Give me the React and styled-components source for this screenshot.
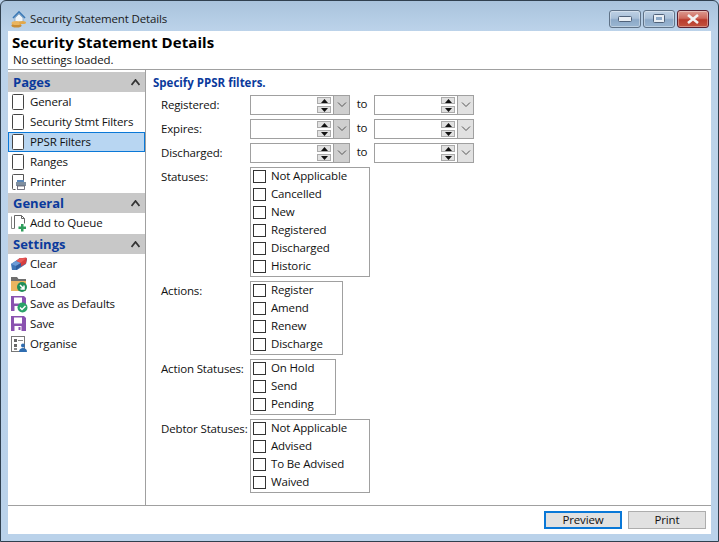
import React from "react";
import styled, { createGlobalStyle } from "styled-components";

const Global = createGlobalStyle`
  html, body { margin: 0; padding: 0; background: #b9d1ea; }
  body { font-family: "Open Sans", "Noto Sans", sans-serif; font-size: 11.5px; letter-spacing: -0.15px; color: #111; }
`;
const Win = styled.div`
  width: 719px; height: 542px; box-sizing: border-box;
  display: flex; flex-direction: column;
  border: 1px solid #30404f; border-radius: 6px 6px 0 0;
  background: linear-gradient(180deg, #a9c3dc 0, #bcd3ea 30px, #bad2ea 100%);
  padding: 0 7px 7px;
`;
const TitleBar = styled.div`
  height: 30px; flex: none; display: flex; align-items: center; box-sizing: border-box;
  margin: 0 -7px; padding: 5px 9px 0 9px;
`;
const TitleText = styled.span`
  margin-left: 2px; padding-bottom: 1px; font-size: 11.5px; color: #1a1a1a; flex: 1;
`;
const Ctl = styled.div`
  width: 32px; height: 18px; box-sizing: border-box; margin-left: 2px;
  display: flex; align-items: center; justify-content: center;
  border: 1px solid ${p => (p.$close ? "#5b2030" : "#5f7287")};
  border-radius: 3px;
  box-shadow: inset 0 0 0 1px rgba(255,255,255,.35);
  background: ${p => p.$close
    ? "linear-gradient(180deg,#dc9a90 0,#cf6a5d 45%,#b93a2c 55%,#c2533f 100%)"
    : "linear-gradient(180deg,#bed1e4 0,#a9c0d8 45%,#8ca9c8 55%,#9ab6d2 100%)"};
`;
const Client = styled.div`
  flex: 1; min-height: 0; display: flex; flex-direction: column; background: #fff;
`;
const Header = styled.div`
  height: 39px; flex: none; box-sizing: border-box; padding: 2px 0 0 4px;
  border-bottom: 1px solid #a0a0a0;
`;
const H1 = styled.div`
  font-weight: 700; font-size: 15px; line-height: 19px; letter-spacing: 0.08px; color: #000;
`;
const Sub = styled.div`
  font-size: 11.5px; line-height: 14px; color: #111; margin: 1px 0 0 1px;
`;
const Body = styled.div`
  flex: 1; min-height: 0; display: flex;
`;
const Side = styled.div`
  width: 138px; flex: none; box-sizing: border-box; border-right: 1px solid #a0a0a0; padding-top: 1px;
`;
const Band = styled.div`
  height: 20px; margin-top: 1px; background: #c8c8c8; display: flex; align-items: center;
  justify-content: space-between; padding: 0 5px 0 5px;
  font-weight: 700; font-size: 13px; letter-spacing: 0; color: #0b3a9c;
`;
const Item = styled.div`
  height: 20px; box-sizing: border-box; display: flex; align-items: center; padding-left: 2px;
  gap: 2px; color: #111;
  ${p => p.$sel && "background:#b8d6f2; border:1px solid #0a78d7; padding-left:1px;"}
`;
const IconBox = styled.span`
  width: 18px; height: 18px; flex: none; display: flex; align-items: center; justify-content: flex-start;
`;
const Caption = styled.span`
  padding-bottom: 2px;
`;
const CheckCaption = styled.span`
  padding-bottom: 3px;
`;
const Main = styled.div`
  flex: 1; padding: 5px 0 0 7px; min-width: 0;
`;
const Title2 = styled.div`
  font-weight: 700; font-size: 11.5px; letter-spacing: 0; line-height: 16px; color: #0b3a9c;
`;
const Form = styled.div`
  margin: 4px 0 0 8px; display: grid; grid-template-columns: 89px auto 1fr; row-gap: 4px;
  grid-auto-rows: min-content;
`;
const Label = styled.div`
  grid-column: 1; line-height: 18px; padding-top: 1px;
`;
const DateRow = styled.div`
  grid-column: 2 / 4; display: flex; align-items: center; height: 20px;
`;
const To = styled.span`
  width: 24px; text-align: center; padding-bottom: 3px;
`;
const DateBox = styled.div`
  width: 100px; height: 20px; box-sizing: border-box; display: flex; justify-content: flex-end;
  border: 1px solid #a0a0a0; background: #fff;
`;
const Spin = styled.div`
  width: 14px; margin-right: 2px; display: flex; flex-direction: column; justify-content: center; gap: 2px;
`;
const SpinBtn = styled.div`
  height: 7px; background: #e1e1e1; border: 1px solid #ababab; box-sizing: border-box; width: 14px;
  display: flex; align-items: center; justify-content: center;
`;
const Drop = styled.div`
  width: 15px; background: ${p => (p.$dark ? "#cfcfcf" : "#e1e1e1")}; border-left: 1px solid #a0a0a0;
  display: flex; align-items: center; justify-content: center;
`;
const CheckList = styled.div`
  grid-column: 2; box-sizing: border-box; width: ${p => p.$w}px; border: 1px solid #a0a0a0; padding: 0 0 0 2px;
`;
const Check = styled.div`
  height: 18px; display: flex; align-items: center; gap: 5px;
`;
const Box = styled.span`
  width: 13px; height: 13px; margin-bottom: 1px; box-sizing: border-box; border: 1px solid #333; background: #fff; flex: none;
`;
const Footer = styled.div`
  height: 29px; flex: none; box-sizing: border-box; border-top: 1px solid #a0a0a0;
  display: flex; justify-content: flex-end; align-items: flex-start; gap: 6px; padding: 5px 5px 0 0;
`;
const Btn = styled.div`
  width: 78px; height: 18px; box-sizing: border-box; background: #e1e1e1;
  border: ${p => (p.$def ? "2px solid #0a78d7" : "1px solid #adadad")};
  display: flex; align-items: center; justify-content: center; color: #111; line-height: 14px;
`;

const Page = () => (
  <svg width="16" height="16" viewBox="0 0 16 16"><rect x="2.5" y="0.5" width="11" height="15" rx="1" fill="#fff" stroke="#444" /></svg>
);
const Printer = () => (
  <svg width="18" height="16" viewBox="0 0 18 16">
    <path d="M5.500 15.500h-2a1 1 0 0 1-1-1V1.500a1 1 0 0 1 1-1h10v6" fill="none" stroke="#555" />
    <rect x="7" y="6" width="7" height="2" fill="#5a86b8" />
    <rect x="6" y="8" width="10" height="4" fill="#7f8fa0" />
    <rect x="7.500" y="12" width="7" height="3.500" fill="#fff" stroke="#556" strokeWidth=".8" />
  </svg>
);
const Queue = () => (
  <svg width="18" height="18" viewBox="0 0 18 18">
    <path d="M1.500 2.500v12h3" fill="none" stroke="#888" />
    <path d="M4.500 14.500v-13h7l3 3v5" fill="#fff" stroke="#666" />
    <path d="M11.500 1.500v3h3" fill="none" stroke="#666" />
    <path d="M11 10h2.500v2.500H16V15h-2.500v2.500H11V15H8.500v-2.500H11z" fill="#2e9e5b" />
  </svg>
);
const Eraser = () => (
  <svg width="18" height="16" viewBox="0 0 18 16">
    <path d="M1 8l9-6 6 0 1 1-1 5-9 6-5 0z" fill="#3e74b6" />
    <path d="M9 2.500l7-1 1 1-1 5-5 3-4-3z" fill="#d63f3f" />
    <path d="M1 8l5-3 5 2-5 3z" fill="#6b9bd6" />
    <path d="M6 5l4-3 6 .5-5 4z" fill="#ea5b58" />
    <path d="M6 10l5-3v3l-5 4z" fill="#2d5c9c" />
  </svg>
);
const Folder = () => (
  <svg width="18" height="18" viewBox="0 0 18 18">
    <path d="M1 2h6l1.500 2H16v2H1z" fill="#6e6e6e" />
    <path d="M1 6h15v10H1z" fill="#eab560" />
    <circle cx="12" cy="12" r="5" fill="#1f8f5a" />
    <path d="M10 10l3.500 3.500M14 10.500v3.500h-3.500" fill="none" stroke="#fff" strokeWidth="1.500" />
  </svg>
);
const Floppy = ({ check }) => (
  <svg width="18" height="18" viewBox="0 0 18 18">
    <path d="M1 1h13l2 2v13H1z" fill="#8a52b0" />
    <rect x="4" y="2.500" width="8" height="6" fill="#fff" />
    <rect x="4.500" y="11" width="7" height="5" fill="#fff" />
    <rect x="8.500" y="12" width="2" height="3" fill="#8a52b0" />
    {check && <>
      <circle cx="12.500" cy="12.500" r="5" fill="#2aa268" />
      <path d="M10 12.500l2 2 3.500-3.500" fill="none" stroke="#fff" strokeWidth="1.500" />
    </>}
  </svg>
);
const Organise = () => (
  <svg width="18" height="18" viewBox="0 0 18 18">
    <rect x="1.500" y="1.500" width="13" height="15" fill="#fff" stroke="#777" />
    <rect x="4" y="4" width="3" height="3" fill="#666" />
    <rect x="8" y="5" width="5" height="1" fill="#888" />
    <rect x="4" y="9" width="3" height="3" fill="#666" />
    <rect x="4" y="13" width="3" height="2" fill="#888" />
    <circle cx="13" cy="10.500" r="2" fill="#2f6db0" />
    <path d="M9 17c0-3 2-4 4-4s4 1 4 4z" fill="#2f6db0" />
  </svg>
);
const House = () => (
  <svg width="18" height="18" viewBox="0 0 18 18">
    <path d="M3 8l6-6 6 6" fill="none" stroke="#3a78b5" strokeWidth="1.600" />
    <path d="M5 8l4-4 4 4v4H5z" fill="#eef4fa" stroke="#7d9cba" strokeWidth=".7" />
    <ellipse cx="6.500" cy="15.500" rx="5" ry="2" fill="#c98d35" />
    <ellipse cx="6.500" cy="13" rx="5" ry="2" fill="#eab560" />
    <ellipse cx="12.500" cy="12.500" rx="3.500" ry="1.600" fill="#e3a84a" />
  </svg>
);
const Chevron = () => (
  <svg width="12" height="8" viewBox="0 0 12 8"><path d="M2 1.500l4 4 4-4" fill="none" stroke="#555" strokeWidth="1" /></svg>
);
const Caret = ({ down }) => (
  <svg width="7" height="4" viewBox="0 0 7 4"><path d={down ? "M0 0h7L3.500 4z" : "M3.500 0L7 4H0z"} fill="#111" /></svg>
);
const Collapse = () => (
  <svg width="9" height="7" viewBox="0 0 9 7"><path d="M0.500 6L4.500 1l4 5" fill="none" stroke="#333" strokeWidth="1.800" /></svg>
);

const DateField = ({ dark }) => (
  <DateBox>
    <Spin>
      <SpinBtn><Caret /></SpinBtn>
      <SpinBtn><Caret down /></SpinBtn>
    </Spin>
    <Drop $dark={dark}><Chevron /></Drop>
  </DateBox>
);

const Section = ({ title, items }) => (
  <>
    <Band>{title}<Collapse /></Band>
    {items.map(([t, I, sel]) => (
      <Item key={t} $sel={sel}><IconBox>{I}</IconBox><Caption>{t}</Caption></Item>
    ))}
  </>
);

const groups = [
  ["Statuses:", 120, ["Not Applicable", "Cancelled", "New", "Registered", "Discharged", "Historic"]],
  ["Actions:", 93, ["Register", "Amend", "Renew", "Discharge"]],
  ["Action Statuses:", 86, ["On Hold", "Send", "Pending"]],
  ["Debtor Statuses:", 120, ["Not Applicable", "Advised", "To Be Advised", "Waived"]],
];

export default function App() {
  return (
    <Win>
      <Global />
      <TitleBar>
        <House />
        <TitleText>Security Statement Details</TitleText>
        <Ctl><svg width="14" height="6"><rect x=".5" y=".5" width="13" height="5" rx="1" fill="#e8eef4" stroke="#50627a" /></svg></Ctl>
        <Ctl><svg width="12" height="9"><rect x=".5" y=".5" width="11" height="8" rx="1" fill="#e8eef4" stroke="#50627a" /><rect x="3" y="3" width="6" height="3" fill="#8ca9c8" /></svg></Ctl>
        <Ctl $close><svg width="14" height="10" viewBox="0 0 14 10"><path d="M2 1l10 8M12 1L2 9" stroke="#f2f2f2" strokeWidth="2.600" /></svg></Ctl>
      </TitleBar>
      <Client>
        <Header>
          <H1>Security Statement Details</H1>
          <Sub>No settings loaded.</Sub>
        </Header>
        <Body>
          <Side>
            <Section title="Pages" items={[
              ["General", <Page />],
              ["Security Stmt Filters", <Page />],
              ["PPSR Filters", <Page />, true],
              ["Ranges", <Page />],
              ["Printer", <Printer />],
            ]} />
            <Section title="General" items={[["Add to Queue", <Queue />]]} />
            <Section title="Settings" items={[
              ["Clear", <Eraser />],
              ["Load", <Folder />],
              ["Save as Defaults", <Floppy check />],
              ["Save", <Floppy />],
              ["Organise", <Organise />],
            ]} />
          </Side>
          <Main>
            <Title2>Specify PPSR filters.</Title2>
            <Form>
              {["Registered:", "Expires:", "Discharged:"].map(l => (
                <React.Fragment key={l}>
                  <Label>{l}</Label>
                  <DateRow><DateField dark /><To>to</To><DateField /></DateRow>
                </React.Fragment>
              ))}
              {groups.map(([l, w, items]) => (
                <React.Fragment key={l}>
                  <Label>{l}</Label>
                  <CheckList $w={w}>
                    {items.map(i => <Check key={i}><Box /><CheckCaption>{i}</CheckCaption></Check>)}
                  </CheckList>
                </React.Fragment>
              ))}
            </Form>
          </Main>
        </Body>
        <Footer>
          <Btn $def>Preview</Btn>
          <Btn>Print</Btn>
        </Footer>
      </Client>
    </Win>
  );
}
